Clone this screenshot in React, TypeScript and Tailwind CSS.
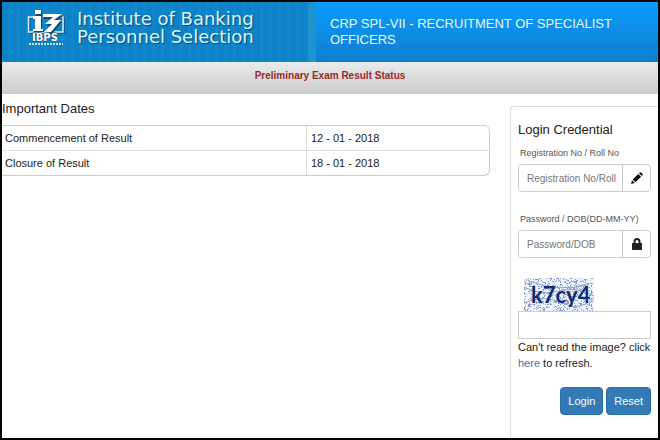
import { useState } from "react"

type ImportantDate = {
    label: string;
    date: string;
}

const dates: ImportantDate[] = [
    { label: "Commencement of Result", date: "12 - 01 - 2018" },
    { label: "Closure of Result", date: "18 - 01 - 2018" },
]

const IbpsLogo = () => {
    return (
        <svg width="38" height="36" viewBox="0 0 38 36" className="shrink-0" aria-label="IBPS">
            <path d="M7 8H2.500v15H37V8h-3" fill="none" stroke="#17506f" strokeWidth="1.500" />
            <path d="M6 7H1.500v15H36V7h-3" fill="none" stroke="#d8f1fb" strokeWidth="1.500" />
            <path d="M8 1h6v4H8zM6 7h8v12h2v2H6v-2h2V9H6z" fill="#164b68" transform="translate(1 1)" />
            <path d="M8 0h6v4H8zM6 6h8v13h2v2H6v-2h2V9H6z" fill="#fff" />
            <path d="M16 5h19l-8 6h7l-10 12-8 1 9-9h-7l8-7h-10z" fill="#164b68" transform="translate(1 1)" />
            <path d="M16 4h19l-8 6h7L24 22l-8 1 9-9h-7l8-7H16z" fill="#fff" />
            <text x="5" y="31" fontFamily="DejaVu Sans" fontSize="10" fontWeight="bold" fill="#fff" stroke="#174a66" strokeWidth="1" paintOrder="stroke">IBPS</text>
            <path d="M2 34h34" stroke="#bfe6f7" strokeWidth="2" strokeDasharray="2 1" />
        </svg>
    )
}

const PencilIcon = () => (
    <svg width="12" height="12" viewBox="0 0 12 12" fill="#111" aria-hidden="true">
        <path d="M0 12l1-3.800L3.800 11zM1.700 7.500l5.600-5.600 2.800 2.800-5.600 5.600zM8 1.200L8.900.4q.6-.5 1.200 0l1.500 1.500q.5.600 0 1.200l-.8.900z" />
    </svg>
)

const LockIcon = () => (
    <svg width="10" height="12" viewBox="0 0 10 12" fill="#222" aria-hidden="true">
        <path d="M1.500 5V3.500a3.500 3.500 0 0 1 7 0V5H9.500q.5 0 .5.500v6q0 .5-.5.500h-9q-.5 0-.5-.5v-6q0-.5.500-.5zM3.500 5h3V3.500a1.500 1.500 0 0 0-3 0z" />
    </svg>
)

// scattered specks behind the captcha letters
const specks = Array.from({ length: 620 }, (_, i) => {
    const a = Math.abs(Math.sin(i * 12.9898) * 43758.5453) % 1
    const b = Math.abs(Math.sin(i * 78.233 + 1) * 24634.6345) % 1
    return "M" + Math.floor(a * 69) + " " + Math.floor(b * 33) + "h1v1h-1z"
}).join("")

const Captcha = () => {
    return (
        <svg width="70" height="33" viewBox="0 0 70 33" className="ml-[6px] block" aria-label="Captcha">
            <path d="M0 0h70v33H0z" fill="#eef2fa" />
            <path d={specks} fill="#8b9dc9" />
            <path d="M0 9q17 9 35 4t35 5M0 25q20-9 38 0t32-5M5 3q30 12 60 3" stroke="#8ba0cc" fill="none" />
            <text x="7" y="25" fontFamily="Lato" fontWeight="bold" fontSize="22" fill="#102c78">k7cy4</text>
        </svg>
    )
}

interface FieldProps {
    id: string;
    label: string;
    placeholder: string;
    type: string;
    icon: React.ReactNode;
}

const Field: React.FC<FieldProps> = ({ id, label, placeholder, type, icon }) => {
    return (
        <div>
            <label htmlFor={id} className="block pl-[2px] text-[9px] leading-[14px] text-[#555]">{label}</label>
            <div className="mt-1 flex h-7 rounded border border-[#ccc]">
                <input
                    id={id}
                    type={type}
                    placeholder={placeholder}
                    className="w-full min-w-0 flex-1 rounded-l bg-white pl-2 text-[10px] outline-none placeholder:text-[#777]"
                />
                <span className="flex w-7 items-center justify-center border-l border-[#ccc]">{icon}</span>
            </div>
        </div>
    )
}

const Header = () => {
    return (
        <header className="flex">
            <div className="flex h-[60px] w-[314px] shrink-0 items-center border-r-8 border-[#1c93cd] bg-[repeating-linear-gradient(90deg,#0d82c8_0px,#0d82c8_6px,#1286ca_6px,#1286ca_9px)] pb-2 pl-[25px]">
                <IbpsLogo />
                <div className="ml-3 whitespace-nowrap font-['DejaVu_Sans'] text-[18px] leading-[18px] text-[#dcf6ff] [text-shadow:1px_1px_1px_#064b78]">
                    <div>Institute of Banking</div>
                    <div>Personnel Selection</div>
                </div>
            </div>
            <h1 className="flex flex-1 items-center border-b border-[#0b76bd] bg-linear-to-b from-[#0a9bff] to-[#107fce] pr-4 pl-[14px] text-[13px] leading-4 text-[#e4fbff]">
                CRP SPL-VII - RECRUITMENT OF SPECIALIST OFFICERS
            </h1>
        </header>
    )
}

const LoginPanel = () => {
    const [captcha, setcaptcha] = useState("")
    return (
        <form className="mt-3 w-[148px] shrink-0 rounded-tl border-t border-l border-[#ddd] pt-3 pr-[7px] pl-[7px]" onSubmit={(e) => e.preventDefault()}>
            <h2 className="text-[13px] leading-[22px]">Login Credential</h2>
            <div className="mt-[5px] flex flex-col gap-5">
                <Field id="regno" label="Registration No / Roll No" placeholder="Registration No/Roll" type="text" icon={<PencilIcon />} />
                <Field id="password" label="Password / DOB(DD-MM-YY)" placeholder="Password/DOB" type="password" icon={<LockIcon />} />
            </div>
            <div className="mt-5">
                <Captcha />
                <input
                    aria-label="Captcha text"
                    value={captcha}
                    onChange={(e) => setcaptcha(e.target.value)}
                    className="block h-7 w-full border border-[#ccc] bg-white px-2 text-[10px] outline-none"
                />
            </div>
            <p className="text-[11px] leading-4 text-[#222]">
                Can't read the image? click <a href="#" className="text-[#337ab7]">here</a> to refresh.
            </p>
            <div className="mt-4 flex justify-end gap-[3px]">
                <button type="submit" className="h-7 rounded border border-[#2e6da4] bg-[#337ab7] px-[7px] text-[11px] text-white">Login</button>
                <button type="reset" onClick={() => setcaptcha("")} className="h-7 rounded border border-[#2e6da4] bg-[#337ab7] px-[7px] text-[11px] text-white">Reset</button>
            </div>
        </form>
    )
}

export default function App() {
    return (
        <div className="flex min-h-screen flex-col border-2 border-black bg-white font-['Liberation_Sans',sans-serif] text-[#222]">
            <Header />
            <div className="h-8 bg-linear-to-b from-[#ebebeb] to-[#cbcbcb] text-center text-[10px] leading-7 font-bold text-[#982a2a]">
                Preliminary Exam Result Status
            </div>
            <main className="flex flex-1">
                <section className="flex-1 pt-1 pr-5">
                    <h2 className="text-[13px] leading-[22px]">Important Dates</h2>
                    <div className="mt-[5px] overflow-hidden rounded-r-md border border-l-0 border-[#ccc]">
                        <table className="w-full table-fixed text-left text-[11px] leading-6">
                            <tbody>
                                {dates.map((d, i) => (
                                    <tr key={d.label} className={i > 0 ? "border-t border-[#ddd]" : ""}>
                                        <td className="w-5/8 pl-[3px]">{d.label}</td>
                                        <td className="border-l border-[#ddd] pl-1">{d.date}</td>
                                    </tr>
                                ))}
                            </tbody>
                        </table>
                    </div>
                </section>
                <LoginPanel />
            </main>
        </div>
    )
}
